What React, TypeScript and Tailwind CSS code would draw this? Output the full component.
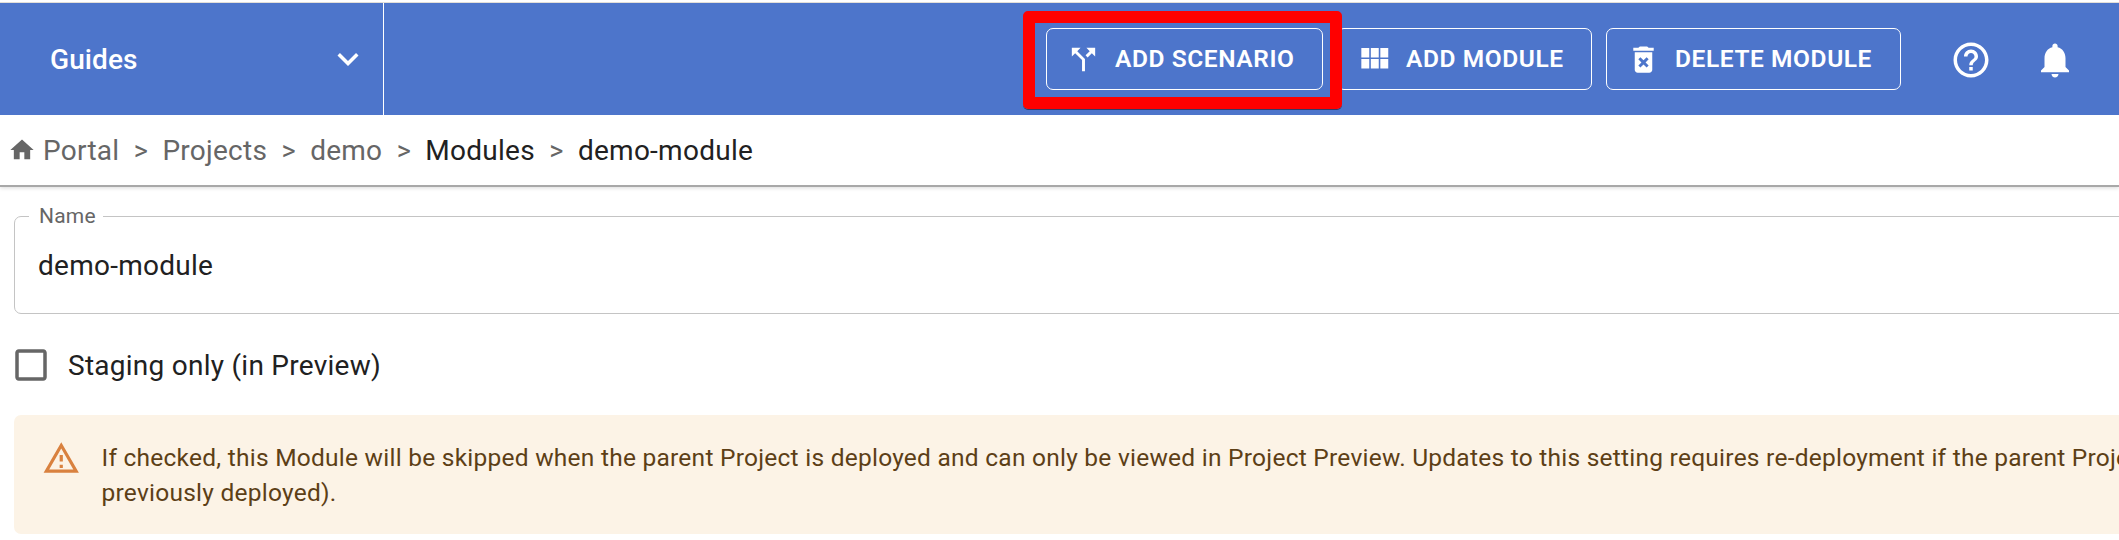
import type { ReactNode } from "react";

type IconProps = { d: string; className: string };

function Icon({ d, className }: IconProps) {
  return (
    <svg viewBox="0 0 24 24" fill="currentColor" aria-hidden="true" className={`block shrink-0 ${className}`}>
      <path d={d} />
    </svg>
  );
}

const paths = {
  chevron: "M16.59 8.59 12 13.17 7.41 8.59 6 10l6 6 6-6z",
  split: "m14 4 2.29 2.29-2.88 2.88 1.42 1.42 2.88-2.88L20 10V4zm-4 0H4v6l2.29-2.29 4.71 4.7V20h2v-8.41l-5.29-5.3z",
  grid: "M4 11h5V5H4v6zm0 7h5v-6H4v6zm6 0h5v-6h-5v6zm6 0h5v-6h-5v6zm-6-7h5V5h-5v6zm6-6v6h5V5h-5z",
  trash:
    "M6 19c0 1.1.9 2 2 2h8c1.1 0 2-.9 2-2V7H6v12zm2.46-7.12 1.41-1.41L12 12.59l2.12-2.12 1.41 1.41L13.41 14l2.12 2.12-1.41 1.41L12 15.41l-2.12 2.12-1.41-1.41L10.59 14l-2.13-2.12zM15.5 4l-1-1h-5l-1 1H5v2h14V4z",
  help: "M11 18h2v-2h-2v2zm1-16C6.48 2 2 6.48 2 12s4.48 10 10 10 10-4.48 10-10S17.52 2 12 2zm0 18c-4.41 0-8-3.59-8-8s3.59-8 8-8 8 3.59 8 8-3.59 8-8 8zm0-14c-2.21 0-4 1.79-4 4h2c0-1.1.9-2 2-2s2 .9 2 2c0 2-3 1.75-3 5h2c0-2.25 3-2.5 3-5 0-2.21-1.79-4-4-4z",
  bell: "M12 22c1.1 0 2-.9 2-2h-4c0 1.1.89 2 2 2zm6-6v-5c0-3.07-1.64-5.64-4.5-6.32V4c0-.83-.67-1.5-1.5-1.5s-1.5.67-1.5 1.5v.68C7.63 5.36 6 7.92 6 11v5l-2 2v1h16v-1l-2-2z",
  home: "M10 20v-6h4v6h5v-8h3L12 3 2 12h3v8z",
  checkbox: "M19 5v14H5V5h14m0-2H5c-1.1 0-2 .9-2 2v14c0 1.1.9 2 2 2h14c1.1 0 2-.9 2-2V5c0-1.1-.9-2-2-2z",
  warning: "M12 5.99 19.53 19H4.47L12 5.99M12 2 1 21h22L12 2zm1 14h-2v2h2v-2zm0-6h-2v4h2v-4z",
};

function HeaderButton({ className, children }: { className: string; children: ReactNode }) {
  return (
    <button
      type="button"
      className={`relative flex h-[62px] shrink-0 items-center rounded-[7px] border border-white text-[24.5px] font-semibold tracking-[0.58px] whitespace-nowrap ${className}`}
    >
      {children}
    </button>
  );
}

function Separator() {
  return <span className="w-[43px] text-center text-[27px] text-[#666]">&gt;</span>;
}

export default function App() {
  return (
    <div className="h-[540px] w-full overflow-hidden bg-white font-['Roboto',sans-serif] text-[28px] text-[#212121]">
      <header className="flex h-[115px] border-t-2 border-white text-white">
        <div className="flex w-full border-t border-[#e3dfd8] bg-[#4d75cb]">
          <div className="flex w-[384px] shrink-0 items-center justify-between border-r border-white pr-[14px] pl-[50px]">
            <span className="pt-px font-medium tracking-[0.1px]">Guides</span>
            <Icon d={paths.chevron} className="size-[42px]" />
          </div>
          <div className="flex flex-1 items-center justify-end gap-[14px] pr-[43px]">
            <HeaderButton className="z-10 w-[277px] pl-[19px]">
              <Icon d={paths.split} className="size-[35px]" />
              <span className="ml-[14px]">ADD SCENARIO</span>
              <span className="pointer-events-none absolute -top-[18px] -left-[24px] h-[98px] w-[319px] rounded-[5px] border-12 border-[#ff0000] shadow-[0_1px_0_#333a66]" />
            </HeaderButton>
            <HeaderButton className="w-[255px] pl-[17px]">
              <Icon d={paths.grid} className="size-[38px]" />
              <span className="ml-[13px]">ADD MODULE</span>
            </HeaderButton>
            <HeaderButton className="w-[295px] pl-[19px]">
              <Icon d={paths.trash} className="size-[35px]" />
              <span className="ml-[14px]">DELETE MODULE</span>
            </HeaderButton>
            <div className="ml-[35px] flex gap-[42px] pt-px">
              <Icon d={paths.help} className="size-[42px]" />
              <Icon d={paths.bell} className="size-[42px]" />
            </div>
          </div>
        </div>
      </header>

      <nav className="flex h-[72px] items-center border-b-2 border-[#a8a8a8] pl-[8px] tracking-[0.26px] text-[#666] shadow-[0_1px_4px_rgba(0,0,0,0.15)]">
        <Icon d={paths.home} className="mr-[7px] size-[28px]" />
        <div className="flex items-center pt-[2px]">
          <span>Portal</span>
          <Separator />
          <span>Projects</span>
          <Separator />
          <span>demo</span>
          <Separator />
          <span className="text-[#212121]">Modules</span>
          <Separator />
          <span className="text-[#212121]">demo-module</span>
        </div>
      </nav>

      <main className="pt-[16px] pl-[14px]">
        <fieldset className="h-[111px] w-[2140px] rounded-[7px] border border-[#c4c4c4] pl-[14px]">
          <legend className="h-[26px] w-[74px] pl-[10px] text-[21px] leading-[26px] tracking-[0.2px] text-[#666]">Name</legend>
          <div className="pt-[17px] pl-[9px] leading-[40px] tracking-[0.26px]">demo-module</div>
        </fieldset>

        <label className="mt-[30px] flex h-[42px] items-center">
          <Icon d={paths.checkbox} className="-ml-[4px] size-[42px] text-[#666]" />
          <span className="ml-[16px] pt-[2px] tracking-[0.26px]">Staging only (in Preview)</span>
        </label>

        <div className="mt-[29px] flex h-[119px] w-[2140px] rounded-[7px] bg-[#fcf3e6] pt-[24px] pl-[28px] text-[#5d3f16]">
          <Icon d={paths.warning} className="size-[38.5px] text-[#d9813f]" />
          <p className="ml-[21px] pt-px text-[24.5px] leading-[35px] tracking-[0.247px] whitespace-nowrap">
            If checked, this Module will be skipped when the parent Project is deployed and can only be viewed in Project Preview. Updates to this setting requires re-deployment if the parent Project
            <br />
            previously deployed).
          </p>
        </div>
      </main>
    </div>
  );
}
